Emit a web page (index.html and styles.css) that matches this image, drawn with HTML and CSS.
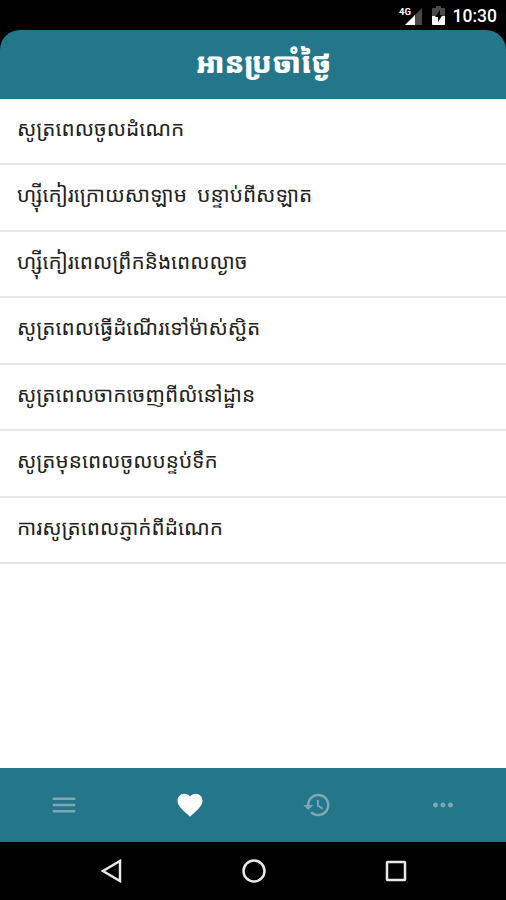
FILE: index.html
```html
<!DOCTYPE html>
<html lang="km">
<head>
    <meta charset="UTF-8">
    <meta name="viewport" content="width=device-width, initial-scale=1">
    <title>អានប្រចាំថ្ងៃ</title>
    <link rel="stylesheet" href="styles.css">
</head>
<body>
    <div class="status-bar">
        <svg class="signal" width="24" height="20" viewBox="0 0 24 20">
            <path d="M23 2v17H6z" fill="#4a4a4a"/>
            <path d="M16 9v10H6z" fill="#fff"/>
            <text x="0" y="9" class="network">4G</text>
        </svg>
        <svg class="battery" width="13" height="19" viewBox="0 0 13 19">
            <path d="M4 0h5v2h3q1 0 1 1v15q0 1-1 1H1q-1 0-1-1V3q0-1 1-1h3z" fill="#4a4a4a"/>
            <path d="M0 10h13v8q0 1-1 1H1q-1 0-1-1z" fill="#fff"/>
            <path d="M8 4v5h2.500L6 16v-5H3z" fill="#000"/>
        </svg>
        <span class="time">10:30</span>
    </div>

    <header class="header">
        <h1>អានប្រចាំថ្ងៃ</h1>
    </header>

    <ul class="list">
        <li>សូត្រពេលចូលដំណេក</li>
        <li>ហ្ស៊ីកៀរក្រោយសាឡាម បន្ទាប់ពីសឡាត</li>
        <li>ហ្ស៊ីកៀរពេលព្រឹកនិងពេលល្ងាច</li>
        <li>សូត្រពេលធ្វើដំណើរទៅម៉ាស់ស្ជិត</li>
        <li>សូត្រពេលចាកចេញពីលំនៅដ្ឋាន</li>
        <li>សូត្រមុនពេលចូលបន្ទប់ទឹក</li>
        <li>ការសូត្រពេលភ្ញាក់ពីដំណេក</li>
    </ul>

    <nav class="tabs">
        <a class="tab">
            <svg width="30" height="30" viewBox="0 0 24 24"><path d="M3 18h18v-2H3v2zm0-5h18v-2H3v2zm0-7v2h18V6H3z"/></svg>
        </a>
        <a class="tab active">
            <svg width="30" height="30" viewBox="0 0 24 24"><path d="M12 21.350l-1.450-1.320C5.400 15.360 2 12.280 2 8.500 2 5.420 4.420 3 7.500 3c1.740 0 3.410.81 4.500 2.090C13.090 3.810 14.760 3 16.500 3 19.580 3 22 5.420 22 8.500c0 3.780-3.400 6.860-8.550 11.540L12 21.350z"/></svg>
        </a>
        <a class="tab">
            <svg width="30" height="30" viewBox="0 0 24 24"><path d="M13 3a9 9 0 0 0-9 9H1l3.890 3.890.07.14L9 12H6c0-3.870 3.130-7 7-7s7 3.130 7 7-3.130 7-7 7c-1.930 0-3.680-.79-4.940-2.060l-1.420 1.420A8.954 8.954 0 0 0 13 21a9 9 0 0 0 0-18zm-1 5v5l4.280 2.540.72-1.210-3.500-2.080V8H12z"/></svg>
        </a>
        <a class="tab">
            <svg width="30" height="30" viewBox="0 0 24 24"><path d="M6 10c-1.100 0-2 .9-2 2s.9 2 2 2 2-.9 2-2-.9-2-2-2zm12 0c-1.100 0-2 .9-2 2s.9 2 2 2 2-.9 2-2-.9-2-2-2zm-6 0c-1.100 0-2 .9-2 2s.9 2 2 2 2-.9 2-2-.9-2-2-2z"/></svg>
        </a>
    </nav>

    <div class="nav-bar">
        <svg width="24" height="24" viewBox="0 0 24 24"><path d="M20 2v20L3 12z"/></svg>
        <svg width="24" height="24" viewBox="0 0 24 24"><circle cx="12" cy="12" r="10.500"/></svg>
        <svg width="24" height="24" viewBox="0 0 24 24"><rect x="3" y="3" width="18" height="18" rx="0.500"/></svg>
    </div>
</body>
</html>
```
FILE: styles.css
```css
* {
    box-sizing: border-box;
}
body {
    margin: 0;
    height: 900px;
    display: flex;
    flex-direction: column;
    background: #fff;
    font-family: "Noto Sans Khmer", "Khmer OS", "Noto Sans", "DejaVu Sans", sans-serif;
    overflow: hidden;
}
.status-bar {
    height: 30px;
    padding: 1px 9px 0 0;
    display: flex;
    justify-content: flex-end;
    align-items: center;
    background: #000;
    color: #fff;
}
.signal {
    margin-right: 9px;
}
.network {
    font: bold 9.5px Roboto, sans-serif;
    fill: #fff;
}
.battery {
    margin-right: 8px;
}
.time {
    font: 500 17.5px Roboto, sans-serif;
}
/* black behind the rounded corners */
.header {
    height: 69px;
    background: linear-gradient(#000 30px, #24768b 30px);
}
.header h1 {
    margin: 0;
    height: 69px;
    padding-left: 21px;
    border-radius: 20px 20px 0 0;
    background: #24768b;
    color: #fff;
    font-size: 28.3px;
    font-weight: 900;
    line-height: 64px;
    text-align: center;
}
.list {
    flex: 1;
    margin: 0;
    padding: 0;
    list-style: none;
}
.list li {
    height: 66.45px;
    padding-left: 17px;
    border-bottom: 2px solid #e6e6e6;
    color: #222;
    font-size: 20.8px;
    line-height: 58px;
    word-spacing: 5px;
    white-space: nowrap;
}
.tabs {
    height: 74px;
    padding-left: 1px;
    display: grid;
    grid-template-columns: repeat(4, 1fr);
    background: #24768b;
}
.tab {
    display: flex;
    justify-content: center;
    align-items: center;
    fill: #7fa6b3;
}
.tab.active {
    fill: #fff;
}
.nav-bar {
    height: 58px;
    padding-left: 2px;
    display: flex;
    justify-content: center;
    align-items: center;
    gap: 118px;
    background: #000;
}
.nav-bar svg {
    fill: none;
    stroke: #e8e8e8;
    stroke-width: 2.5;
}
```
